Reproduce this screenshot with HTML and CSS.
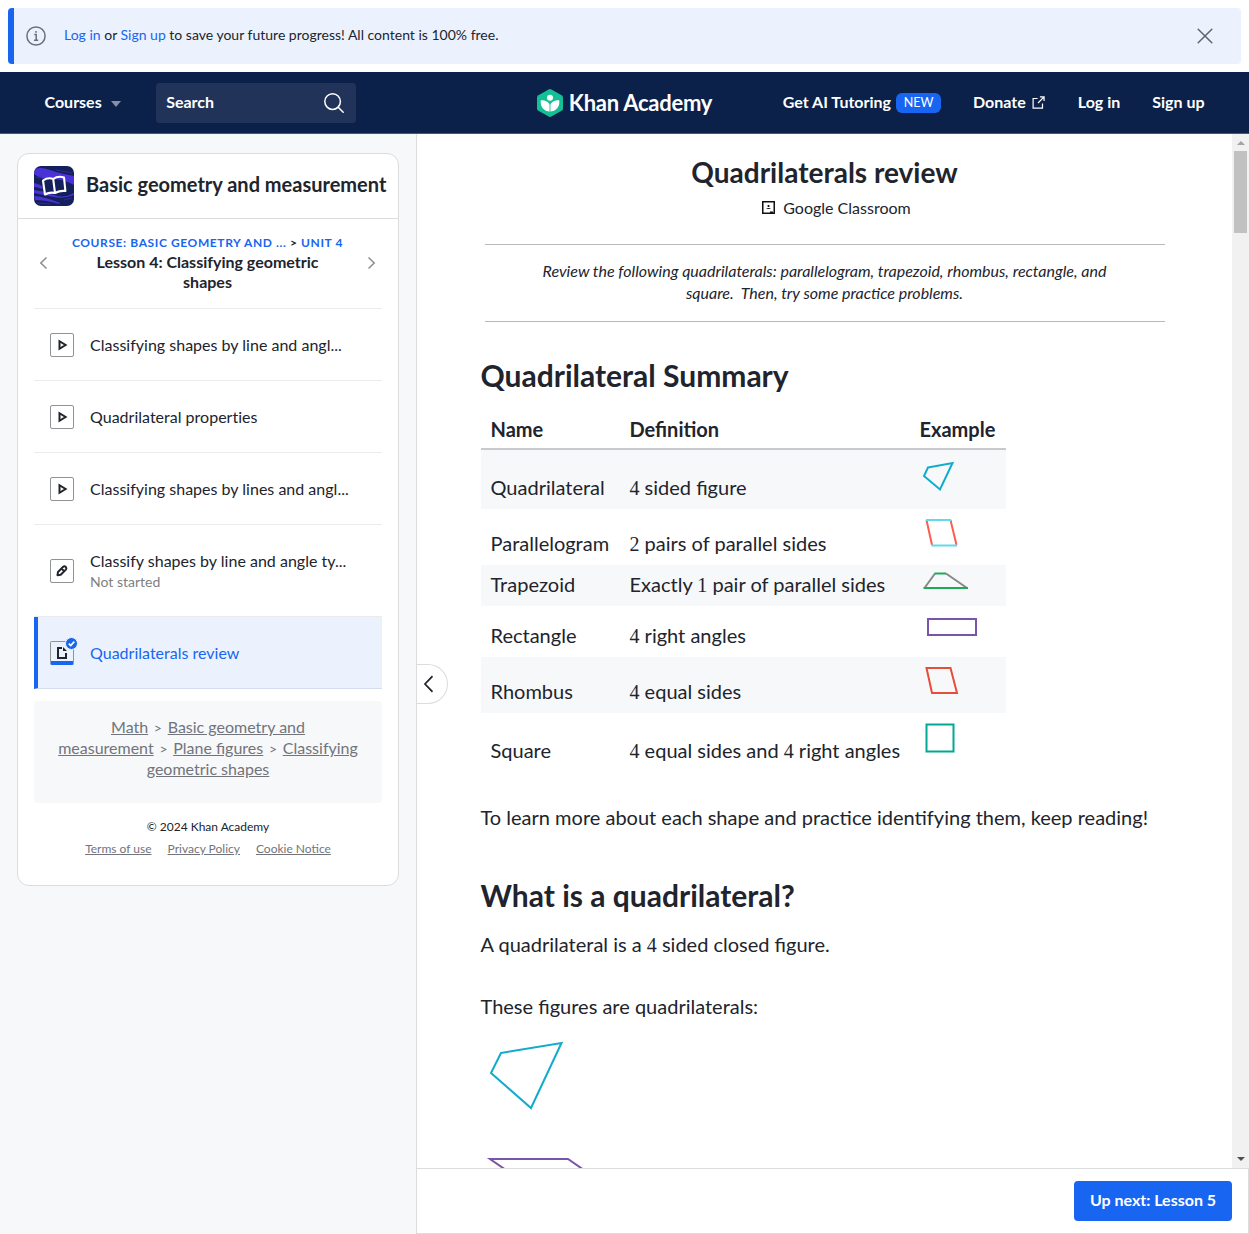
FILE: index.html
```html
<!DOCTYPE html>
<html lang="en">
<head>
<meta charset="utf-8">
<title>Quadrilaterals review | Khan Academy</title>
<link rel="stylesheet" href="styles.css">
</head>
<body>
<div class="banner">
  <svg class="banner-info" width="20" height="20" viewBox="0 0 20 20" fill="none" stroke="#6b6f7a" stroke-width="1.5"><circle cx="10" cy="10" r="9.1"/><path d="M8.3 8.6H10.2V14M8 14.2H12.2"/><circle cx="10" cy="5.9" r=".5" fill="#6b6f7a" stroke-width="1"/></svg>
  <p class="banner-text"><a href="#">Log in</a> or <a href="#">Sign up</a> to save your future progress! All content is 100% free.</p>
  <svg width="16" height="16" viewBox="0 0 16 16" fill="none" stroke="#5f636d" stroke-width="1.5" stroke-linecap="round"><path d="M1.2 1.2L14.8 14.8M14.8 1.2L1.2 14.8"/></svg>
</div>
<header class="topbar">
  <div class="topbar-left">
    <a class="courses" href="#"><span class="label">Courses</span><span class="caret"></span></a>
    <div class="search"><span class="label">Search</span><svg width="20" height="20" viewBox="0 0 20 20" fill="none" stroke="#fff" stroke-width="1.5" stroke-linecap="round"><circle cx="8.6" cy="8.6" r="7.8"/><path d="M14.2 14.2L19.2 19.2"/></svg></div>
  </div>
  <a class="logo" href="#">
    <svg width="26" height="28" viewBox="0 0 26 28"><path d="M11.6.4Q13 -.3 14.4.4L24.6 6.2Q26 7 26 8.600V19.400Q26 21 24.600 21.800L14.400 27.600Q13 28.300 11.600 27.600L1.400 21.800Q0 21 0 19.400V8.600Q0 7 1.400 6.200Z" fill="#14bf96"/><circle cx="13" cy="8.700" r="3" fill="#fff"/><path d="M13 15.800C11.600 12.800 8.400 11 3.800 11.200C2.800 17.500 7 22.400 13 22.600C19 22.400 23.200 17.500 22.200 11.200C17.600 11 14.400 12.800 13 15.800Z" fill="#fff"/><path d="M13 22.600V15" stroke="#14bf96" stroke-width=".9"/></svg>
    <span>Khan Academy</span>
  </a>
  <nav class="topnav">
    <a href="#"><span class="label">Get AI Tutoring</span><span class="new">NEW</span></a>
    <a class="donate" href="#"><span class="label">Donate</span><svg width="13" height="13" viewBox="0 0 14 14" fill="none" stroke="#fff" stroke-width="1.3"><path d="M6 2.700H1.200V13H11.300V8M8.500 1H13V5.500M13 1L6.500 7.500"/></svg></a>
    <a href="#"><span class="label">Log in</span></a>
    <a href="#"><span class="label">Sign up</span></a>
  </nav>
</header>
<main class="page">
  <aside class="sidebar">
    <section class="card">
      <div class="card-head">
        <svg class="subject" width="40" height="40" viewBox="0 0 40 40"><rect width="40" height="40" rx="7" fill="#14205c"/><path d="M2 2.500Q8 1 16 4T40 10V19Q30 13 18 13T0 8V6ZM0 17Q6 18 9 21L8 23Q4 21 0 21ZM0 24Q10 25 20 29T40 27V29Q30 33 20 31T0 27ZM0 30Q12 31 26 37L25 38Q12 34 1 34Z" fill="#4a32d8"/><path d="M22 4L38 7M2 11L12 13M3 37L16 38M30 34L38 32" fill="none" stroke="#3526a0"/><g fill="none" stroke="#fff" stroke-width="2.100" stroke-linejoin="round"><path d="M9 14.500Q14 11 19.200 13Q24 9.500 30 11.500L31.400 25Q26 24.300 21 27Q15.500 25.800 11 28.500ZM19.200 13L21 27"/></g></svg>
        <h2>Basic geometry and measurement</h2>
      </div>
      <div class="lesson">
        <svg class="chev" width="8" height="14" viewBox="0 0 8 14" fill="none" stroke="#8a8c91" stroke-width="1.500"><path d="M6.500 1.500L.8 7L6.500 12.500"/></svg>
        <div class="lesson-mid">
          <div class="crumb"><a href="#">Course: Basic geometry and ...</a> &gt; <a href="#">Unit 4</a></div>
          <h3>Lesson 4: Classifying geometric shapes</h3>
        </div>
        <svg class="chev" width="8" height="14" viewBox="0 0 8 14" fill="none" stroke="#8a8c91" stroke-width="1.500"><path d="M.5 1.500L6.200 7L.5 12.500"/></svg>
      </div>
      <ul class="items">
        <li><span class="box"><svg width="24" height="24" viewBox="0 0 24 24"><path d="M9.500 8.200V15.800L15.600 12Z" fill="none" stroke="#21242c" stroke-width="2"/></svg></span><span>Classifying shapes by line and angl...</span></li>
        <li><span class="box"><svg width="24" height="24" viewBox="0 0 24 24"><path d="M9.500 8.200V15.800L15.600 12Z" fill="none" stroke="#21242c" stroke-width="2"/></svg></span><span>Quadrilateral properties</span></li>
        <li><span class="box"><svg width="24" height="24" viewBox="0 0 24 24"><path d="M9.500 8.200V15.800L15.600 12Z" fill="none" stroke="#21242c" stroke-width="2"/></svg></span><span>Classifying shapes by lines and angl...</span></li>
        <li class="tall"><span class="box"><svg width="24" height="24" viewBox="0 0 24 24" fill="none" stroke="#21242c" stroke-width="2" stroke-linejoin="round"><path d="M7.500 16.200L8 13L13.200 7.800Q14.500 6.700 15.800 8Q17 9.300 15.900 10.600L10.700 15.800ZM11.600 9.600L14.200 12.200"/></svg></span><span class="two">Classify shapes by line and angle ty...<small>Not started</small></span></li>
        <li class="current"><span class="box done"><svg width="24" height="24" viewBox="0 0 24 24"><path d="M12 7H8V17H16V12" fill="none" stroke="#21242c" stroke-width="2"/><path d="M13 6L17 10H13Z" fill="#21242c"/></svg><svg class="tick" width="13" height="13" viewBox="0 0 13 13"><circle cx="6.500" cy="6.500" r="6" fill="#1865f2" stroke="#ebf2fe"/><path d="M3.800 6.600L5.700 8.500L9.300 4.700" fill="none" stroke="#fff" stroke-width="1.700"/></svg></span><span>Quadrilaterals review</span></li>
      </ul>
      <div class="trail"><a href="#">Math</a> <i>&gt;</i> <a href="#">Basic geometry and<br>measurement</a> <i>&gt;</i> <a href="#">Plane figures</a> <i>&gt;</i> <a href="#">Classifying<br>geometric shapes</a></div>
      <div class="copy">© 2024 Khan Academy</div>
      <div class="legal"><a href="#">Terms of use</a><a href="#">Privacy Policy</a><a href="#">Cookie Notice</a></div>
    </section>
  </aside>
  <div class="content">
    <div class="scroller">
      <button class="collapse" aria-label="Collapse"><svg width="10" height="18" viewBox="0 0 10 18" fill="none" stroke="#21242c" stroke-width="1.700"><path d="M9.500 1.200L2 9L9.500 16.800"/></svg></button>
      <article class="article">
        <h1>Quadrilaterals review</h1>
        <div class="classroom"><svg width="13" height="13" viewBox="0 0 13 13"><path class="frame" d="M.75 .75H12.250V12.250H.75Z"/><circle cx="6.500" cy="5" r="1.100"/><path class="solid" d="M4 8Q6.500 5.800 9 8ZM8 10.500H11V12H8Z"/></svg>Google Classroom</div>
        <p class="intro">Review the following quadrilaterals: parallelogram, trapezoid, rhombus, rectangle, and square.&nbsp; Then, try some practice problems.</p>
        <h2 class="first">Quadrilateral Summary</h2>
        <table class="summary">
          <thead><tr><th>Name</th><th>Definition</th><th>Example</th></tr></thead>
          <tbody>
            <tr class="r59"><td>Quadrilateral</td><td><b>4</b> sided figure</td><td><svg width="70" height="59" viewBox="0 0 70 59"><path d="M8 17.500L32.500 13L20 39.500L4 26Z" stroke="#11accd"/></svg></td></tr>
            <tr class="r56"><td>Parallelogram</td><td><b>2</b> pairs of parallel sides</td><td><svg width="70" height="56" viewBox="0 0 70 56"><path d="M6.500 11L12 36M30.500 11L36.500 36" stroke="#ff5c51"/><path d="M6 11H31M11.500 36.500H37" stroke="#63d9ea"/></svg></td></tr>
            <tr class="r41"><td>Trapezoid</td><td>Exactly <b>1</b> pair of parallel sides</td><td><svg width="70" height="41" viewBox="0 0 70 41"><path d="M4.500 23L15 8.500M26 8.500L47 23" stroke="#888"/><path d="M14.500 8.500H26M3.500 23H48" stroke="#1fab54"/></svg></td></tr>
            <tr class="r51"><td>Rectangle</td><td><b>4</b> right angles</td><td><svg width="70" height="51" viewBox="0 0 70 51"><path d="M8 13H56V29H8Z" stroke="#7854ab"/></svg></td></tr>
            <tr class="r56"><td>Rhombus</td><td><b>4</b> equal sides</td><td><svg width="70" height="56" viewBox="0 0 70 56"><path d="M6.500 11H30.500L37 36H12Z" stroke="#e84d39"/></svg></td></tr>
            <tr class="r59"><td>Square</td><td><b>4</b> equal sides and <b>4</b> right angles</td><td><svg width="70" height="59" viewBox="0 0 70 59"><path d="M6.500 11.500H33.500V38.500H6.500Z" stroke="#01a995"/></svg></td></tr>
          </tbody>
        </table>
        <p class="learn">To learn more about each shape and practice identifying them, keep reading!</p>
        <h2 class="second">What is a quadrilateral?</h2>
        <p class="closed">A quadrilateral is a <b>4</b> sided closed figure.</p>
        <p class="these">These figures are quadrilaterals:</p>
        <svg class="figures" width="200" height="200" viewBox="0 0 200 200"><path d="M20 23L80.500 13L50 78L10 43Z" stroke="#11accd"/><path d="M9 129H87L132 160H54Z" stroke="#7854ab"/></svg>
      </article>
      <div class="scrollbar"><span class="up"></span><span class="thumb"></span><span class="down"></span></div>
    </div>
    <footer class="next"><button>Up next: Lesson 5</button></footer>
  </div>
</main>
</body>
</html>
```
FILE: styles.css
```css
* { box-sizing: border-box; }
body { margin: 0; height: 1234px; overflow: hidden; display: flex; flex-direction: column; font-family: Lato, "Noto Sans", sans-serif; color: #21242c; background: #fff; }
h1, h2, h3, p, ul { margin: 0; padding: 0; }
a { color: #1865f2; text-decoration: none; }
svg { display: block; flex: none; }
button { font: inherit; border: 0; padding: 0; }

.banner { margin: 8px; height: 56px; flex: none; display: flex; align-items: center; padding: 0 28px 0 12px; background: #ebf2fe; border-left: 6px solid #1865f2; border-radius: 4px; }
.banner-text { flex: 1; margin-left: 18px; font-size: 14px; line-height: 20px; padding-bottom: 3px; }

.topbar { flex: none; height: 62px; display: grid; grid-template-columns: 1fr auto 1fr; align-items: center; padding: 0 44.5px 0 44.5px; background: #0b2149; border-bottom: 1px solid #4a5878; color: #fff; font-size: 16px; font-weight: 700; line-height: 20px; }
.topbar a { color: #fff; }
.topbar-left { display: flex; align-items: center; gap: 35px; }
.label { padding-bottom: 2px; }
.courses { display: flex; align-items: center; gap: 9.5px; }
.caret { border: 5.5px solid transparent; border-top: 6px solid #8590a4; border-bottom: 0; margin-top: 2px; }
.search { width: 200px; height: 40px; padding: 0 12px 0 10px; display: flex; align-items: center; justify-content: space-between; background: #213358; border-radius: 4px; }
.logo { display: flex; align-items: center; gap: 6px; font-size: 22px; line-height: 28px; letter-spacing: -.25px; }
.topnav { display: flex; justify-content: flex-end; align-items: center; gap: 32px; }
.topnav a { display: flex; align-items: center; gap: 5px; }
.topnav .donate { gap: 6px; padding-right: 1px; }
.new { background: #1865f2; border-radius: 6px; width: 45px; height: 20px; font-size: 12.5px; font-weight: 400; text-align: center; line-height: 20px; }

.page { flex: 1; min-height: 0; display: flex; }
.sidebar { width: 417px; flex: none; border-right: 1px solid #dbdcdd; background: #f7f8fa; padding: 19px 17px; }
.card { width: 382px; height: 733px; background: #fff; border: 1px solid #dbdcdd; border-radius: 12px; }
.card-head { height: 65px; display: flex; align-items: center; gap: 12px; padding-left: 16px; border-bottom: 1px solid #dbdcdd; }
.card-head h2 { font-size: 20px; line-height: 24px; white-space: nowrap; padding-bottom: 4px; }
.lesson { margin: 0 16px; height: 90px; display: flex; align-items: center; border-bottom: 1px solid #ebebec; padding: 0 6.5px 2px 5.5px; }
.lesson-mid { flex: 1; text-align: center; }
.crumb { font-size: 12px; line-height: 18px; text-transform: uppercase; letter-spacing: .6px; font-weight: 700; white-space: nowrap; }
.lesson h3 { font-size: 16px; line-height: 20px; padding: 0 40px; }
.items { list-style: none; margin: 0 16px; }
.items li { height: 72px; display: flex; align-items: center; gap: 16px; padding-left: 16px; border-bottom: 1px solid #ebebec; font-size: 16px; line-height: 20px; letter-spacing: .01px; white-space: nowrap; }
.items li.tall { height: 92px; }
.items small { display: block; font-size: 14px; line-height: 18px; padding-top: 2px; color: #7d7f84; }
.items .box { position: relative; width: 24px; height: 24px; border: 1px solid #909296; border-radius: 2px; }
.box > svg:first-child { margin: -1px; }
.items li.current { background: #ebf2fe; border-left: 4px solid #1865f2; padding-left: 12px; color: #1865f2; border-bottom-color: #d5dcec; }
.box.done { border-bottom: 4px solid #1865f2; }
.tick { position: absolute; top: -5px; right: -5px; }
.trail { margin: 12px 16px 0; height: 102px; padding: 15px 20px; background: #f7f8fa; border-radius: 4px; text-align: center; font-size: 16px; line-height: 21px; color: #71747b; }
.trail a, .legal a { color: #71747b; text-decoration: underline; }
.trail i { font-style: normal; font-size: 14px; line-height: 0; margin: 0 1.6px; }
.copy { margin-top: 16px; text-align: center; font-size: 12px; line-height: 16px; }
.legal { margin-top: 6px; display: flex; justify-content: center; gap: 16px; font-size: 12px; line-height: 16px; }

.content { flex: 1; display: flex; flex-direction: column; }
.scroller { position: relative; flex: 1; min-height: 0; display: flex; overflow: hidden; }
.collapse { position: absolute; left: 0; top: 530px; width: 31px; height: 40px; background: #fff; border: 1px solid #dbdcdd; border-left: 0; border-radius: 0 20px 20px 0; display: flex; align-items: center; padding-left: 6px; }
.article { width: 688px; margin: 0 auto; font-size: 20px; line-height: 28px; }
.article h1 { margin-top: 22px; text-align: center; font-size: 28px; line-height: 32px; }
.classroom { margin-top: 10px; display: flex; justify-content: center; align-items: center; gap: 8px; padding-left: 24px; font-size: 16px; line-height: 20px; }
.classroom svg { margin-bottom: 2px; }
.intro { margin: 26px 4px 0; height: 78px; padding: 15px 50px; border-top: 1px solid #b8b9bb; border-bottom: 1px solid #b8b9bb; text-align: center; font-size: 16px; font-style: italic; line-height: 22px; }
.article h2 { font-size: 30px; line-height: 36px; }
.article h2.first { margin-top: 35px; }
.article b { font-family: "Liberation Serif", serif; font-weight: 400; font-size: 20px; line-height: 0; }
.summary { margin-top: 18px; width: 525px; table-layout: fixed; border-collapse: collapse; }
.summary th { height: 38px; padding: 0 0 5px 10px; text-align: left; border-bottom: 2px solid #c7c9cc; vertical-align: bottom; }
.summary th:nth-child(1) { width: 139px; }
.summary th:nth-child(2) { width: 290px; }
.summary td { padding: 0 0 8px 10px; vertical-align: bottom; white-space: nowrap; }
.summary td:last-child { padding: 0 0 0 10px; vertical-align: top; }
.summary tbody tr:nth-child(odd) { background: #f7f8fa; }
.article svg path { stroke-width: 2; fill: none; }
.article svg .frame { stroke: #111; stroke-width: 1.5; }
.article svg .solid { fill: #111; }
.r59 { height: 59px; } .r56 { height: 56px; } .r51 { height: 51px; } .r41 { height: 41px; }
.learn { margin-top: 31px; white-space: nowrap; }
.article h2.second { margin-top: 46px; }
.closed { margin-top: 17px; }
.these { margin-top: 34px; }
.figures { margin-top: 10px; }
.scrollbar { width: 17px; background: #f1f1f1; display: flex; flex-direction: column; align-items: center; padding: 7px 0; }
.up { border: 4px solid transparent; border-top: 0; border-bottom: 4px solid #a3a3a3; }
.thumb { width: 13px; height: 82px; margin-top: 6px; background: #c1c1c1; }
.down { margin-top: auto; border: 4px solid transparent; border-bottom: 0; border-top: 4px solid #505050; }
.next { height: 66px; flex: none; display: flex; justify-content: flex-end; align-items: center; padding-right: 16px; border: 1px solid #dbdcdd; border-left: 0; }
.next button { width: 158px; height: 40px; padding-bottom: 3px; background: #1865f2; color: #fff; border-radius: 4px; font-size: 16px; font-weight: 700; }
```
